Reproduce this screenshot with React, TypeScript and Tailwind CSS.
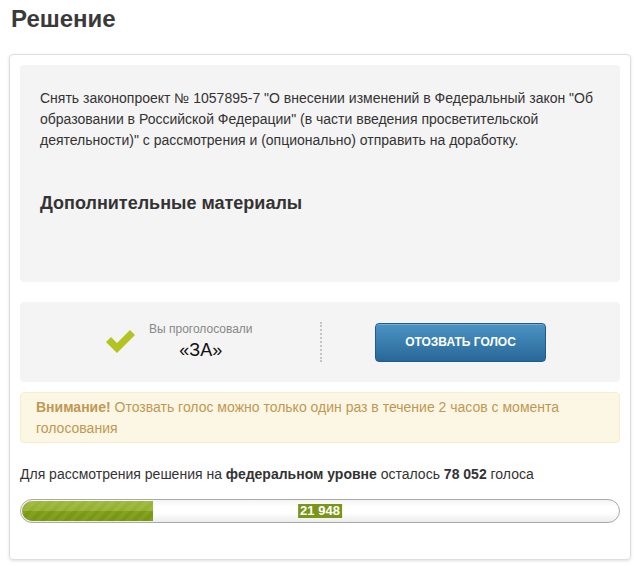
import React from 'react';

function CheckMark() {
  return (
    <svg width="29" height="24" viewBox="0 0 29 24" className="shrink-0">
      <polygon points="0,12 5,7 11,13 24,0 29,5 11,23" fill="#b3c320" />
    </svg>
  );
}

export default function App() {
  return (
    <div className="min-h-screen bg-white font-['Liberation_Sans',Arial,sans-serif] text-[#333]">
      <h1 className="px-[11px] pt-[5px] text-[24px] font-bold leading-[28px] text-[#3a3a3a]">Решение</h1>

      <div className="ml-[9px] mt-[21px] w-[622px] rounded-[4px] border border-[#dedede] px-[10px] pt-[10px] pb-[36px] shadow-[0_1px_3px_rgba(0,0,0,0.12)]">
        <div className="h-[217px] rounded-[4px] bg-[#f4f4f4] px-[20px] pt-[23px]">
          <p className="text-[14px] leading-[21px] text-[#333]">
            Снять законопроект № 1057895-7 "О внесении изменений в Федеральный закон "Об образовании в Российской
            Федерации" (в части введения просветительской деятельности)" с рассмотрения и (опционально) отправить на
            доработку.
          </p>
          <h3 className="mt-[40px] text-[18px] font-bold leading-[24px] text-[#333]">Дополнительные материалы</h3>
        </div>

        <div className="mt-[20px] flex h-[80px] items-center rounded-[4px] bg-[#f4f4f4]">
          <div className="flex w-[300px] items-center pl-[86px]">
            <CheckMark />
            <div className="-mt-[3px] ml-[14px] flex flex-col items-center">
              <span className="text-[12px] leading-[14px] text-[#888]">Вы проголосовали</span>
              <span className="mt-[4px] text-[18px] leading-[20px] text-[#111]">«ЗА»</span>
            </div>
          </div>
          <div className="h-[40px] border-l-[2px] border-dotted border-[#c4c4c4]" />
          <div className="flex flex-1 items-center pl-[53px]">
            <button className="h-[39px] w-[171px] rounded-[4px] border border-[#1f5c8b] bg-[linear-gradient(to_bottom,#4c93c4,#286898)] text-[12px] font-bold uppercase text-white shadow-[inset_0_1px_0_rgba(255,255,255,0.25)]">
              Отозвать голос
            </button>
          </div>
        </div>

        <div className="mt-[10px] rounded-[4px] border border-[#f8eccd] bg-[#fcf7e4] pl-[15px] pr-[15px] pt-[4px] pb-[3px] text-[14px] leading-[21px] text-[#c09853]">
          <b>Внимание!</b> Отозвать голос можно только один раз в течение 2 часов с момента голосования
        </div>

        <p className="mt-[21px] text-[14px] leading-[20px] text-[#333]">
          Для рассмотрения решения на <b>федеральном уровне</b> осталось <b>78 052</b> голоса
        </p>

        <div className="relative mt-[15px] h-[24px] rounded-full border border-[#a9a9a9] bg-[linear-gradient(to_bottom,#f4f4f4,#ffffff_30%,#ffffff_60%,#ececec)] p-[1px]">
          <div className="h-full w-[131px] rounded-l-full bg-[repeating-linear-gradient(-45deg,rgba(255,255,255,0.07)_0_4px,transparent_4px_8px),linear-gradient(to_bottom,#9cb73a,#95b02f_48%,#7d9b16_50%,#77960f)]" />
          <span className="absolute left-1/2 top-[4px] -translate-x-1/2 bg-[#7a9619] px-[2px] text-[13px] font-bold leading-[14px] text-white">
            21 948
          </span>
        </div>
      </div>
    </div>
  );
}
